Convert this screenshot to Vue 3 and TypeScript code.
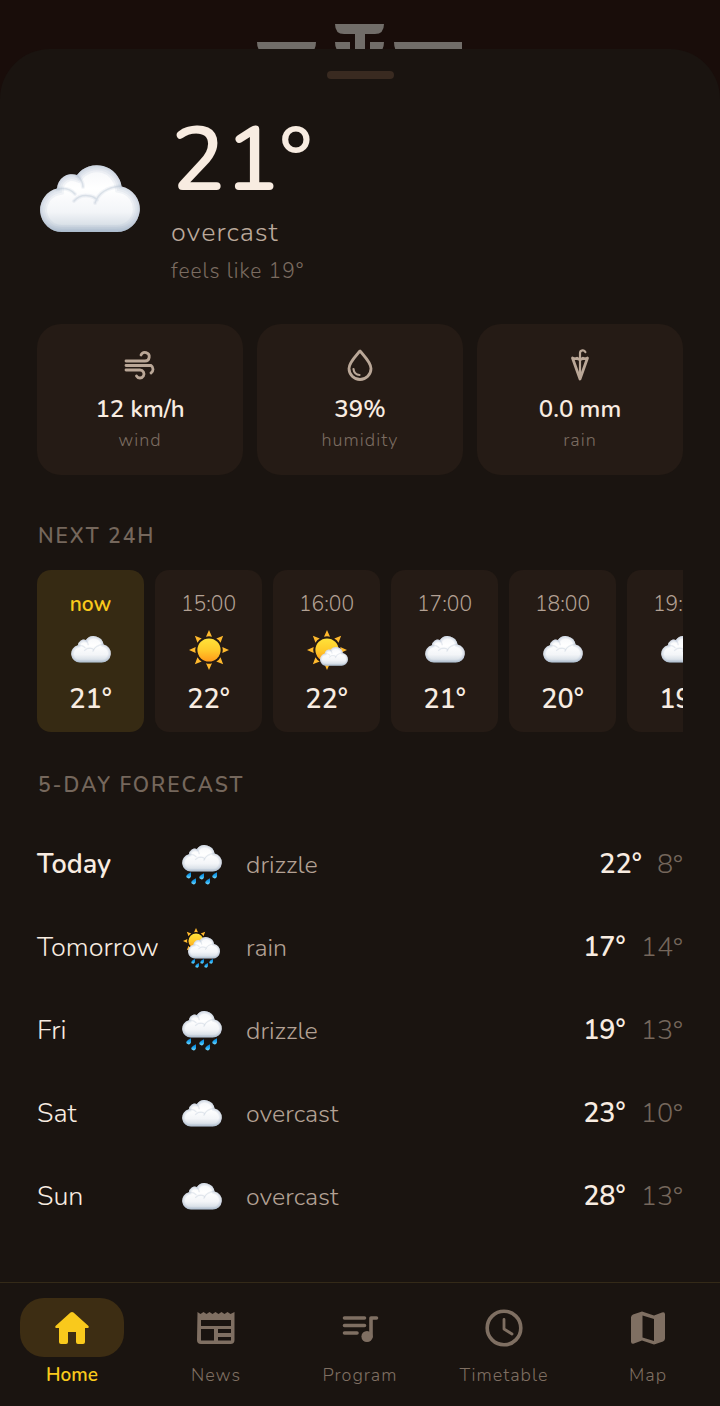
<script setup lang="ts">
type Sky = 'cloud' | 'sun' | 'partly' | 'drizzle' | 'rain'
interface Hour { time: string; sky: Sky; temp: string; now?: boolean }
interface Day { name: string; sky: Sky; text: string; high: string; low: string; today?: boolean }

const stats = [
  { icon: 'wind', value: '12 km/h', label: 'wind' },
  { icon: 'drop', value: '39%', label: 'humidity' },
  { icon: 'umbrella', value: '0.0 mm', label: 'rain' },
]
const hours: Hour[] = [
  { time: 'now', sky: 'cloud', temp: '21°', now: true },
  { time: '15:00', sky: 'sun', temp: '22°' },
  { time: '16:00', sky: 'partly', temp: '22°' },
  { time: '17:00', sky: 'cloud', temp: '21°' },
  { time: '18:00', sky: 'cloud', temp: '20°' },
  { time: '19:00', sky: 'cloud', temp: '19°' },
]
const days: Day[] = [
  { name: 'Today', sky: 'drizzle', text: 'drizzle', high: '22°', low: '8°', today: true },
  { name: 'Tomorrow', sky: 'rain', text: 'rain', high: '17°', low: '14°' },
  { name: 'Fri', sky: 'drizzle', text: 'drizzle', high: '19°', low: '13°' },
  { name: 'Sat', sky: 'cloud', text: 'overcast', high: '23°', low: '10°' },
  { name: 'Sun', sky: 'cloud', text: 'overcast', high: '28°', low: '13°' },
]
const tabs = [
  { label: 'Home', icon: 'home', active: true },
  { label: 'News', icon: 'news', active: false },
  { label: 'Program', icon: 'program', active: false },
  { label: 'Timetable', icon: 'clock', active: false },
  { label: 'Map', icon: 'map', active: false },
]
const cloudOutline = 'M22 67A22 22 0 0 1 17 23.600A15 15 0 0 1 37 10A25 25 0 0 1 81.600 21.500A23 23 0 0 1 77 67z'
const rimLayers = [14, 10, 6, 3]
</script>

<template>
  <div class="app">
    <svg width="0" height="0" class="defs" aria-hidden="true">
      <defs>
        <linearGradient id="base" x1="0" y1="0" x2="0" y2="1">
          <stop offset="0" stop-color="#f4f6f9" />
          <stop offset=".35" stop-color="#ffffff" />
          <stop offset=".7" stop-color="#f3f5f8" />
          <stop offset=".88" stop-color="#dbe2e9" />
          <stop offset="1" stop-color="#b9c8d4" />
        </linearGradient>
        <linearGradient id="disc" x1="0" y1="0" x2="0" y2="1">
          <stop offset="0" stop-color="#ffe23a" />
          <stop offset=".5" stop-color="#ffcb2a" />
          <stop offset="1" stop-color="#ff9a1a" />
        </linearGradient>
        <linearGradient id="water" x1="0" y1="0" x2="0" y2="1">
          <stop offset="0" stop-color="#0a7fd4" />
          <stop offset=".5" stop-color="#1ba3ee" />
          <stop offset="1" stop-color="#7adcff" />
        </linearGradient>
        <clipPath id="cloud-clip"><path :d="cloudOutline" /></clipPath>
        <symbol id="cloud-shape" viewBox="0 0 100 68">
          <path :d="cloudOutline" fill="url(#base)" />
          <g clip-path="url(#cloud-clip)" fill="none" stroke="#9db0c2">
            <path v-for="w in rimLayers" :key="w" :d="cloudOutline" :stroke-width="w" stroke-opacity=".12" />
            <g stroke-linecap="round">
              <path d="M17 24q12-2 18 5M37 10q6 6 6 12M34 36q6-7 16-5 5 1 7 4M55 38q5-15 26-17" stroke-width="4" stroke-opacity=".12" />
              <path d="M17 24q12-2 18 5M37 10q6 6 6 12M34 36q6-7 16-5 5 1 7 4M55 38q5-15 26-17" stroke-width="1.500" stroke-opacity=".28" />
            </g>
          </g>
        </symbol>
        <symbol id="sun-shape" viewBox="0 0 40 40">
          <path
            v-for="n in 8" :key="n" d="M20 0l3 6.700q-3-1-6 0z"
            fill="#ffb92d" :transform="`rotate(${n * 45} 20 20)`"
          />
          <circle cx="20" cy="20" r="11.600" fill="url(#disc)" />
        </symbol>
        <symbol id="bead" viewBox="0 0 6 8">
          <path d="M6 0q.6 3.200-.2 5.600A2.900 2.900 0 0 1 .2 4.600Q1.500 2 6 0z" fill="url(#water)" />
        </symbol>
      </defs>
    </svg>

    <header class="backdrop">
      <svg class="logo" viewBox="0 0 206 36" width="206" height="36" aria-hidden="true">
        <path d="M78 0h49q0 10-9 10h-10v26H98V10H87q-9 0-9-10zM0 18h59q0 9-7 12H7q-7-3-7-12zM78 18h15v12H85q-7-3-7-12zM113 18h14q0 9-7 12h-7zM137 18h68v12h-62q-6-3-6-12z" />
      </svg>
    </header>

    <main class="sheet">
      <div class="handle"></div>
      <section class="current">
        <svg class="big-cloud" viewBox="0 0 100 68"><use href="#cloud-shape" width="100" height="68" /></svg>
        <div>
          <h1>21°</h1>
          <p class="condition">overcast</p>
          <p class="feels">feels like 19°</p>
        </div>
      </section>

      <section class="stats">
        <article v-for="s in stats" :key="s.label" class="stat">
          <svg viewBox="0 0 34 34" class="stat-icon">
            <g v-if="s.icon === 'wind'" class="line">
              <path d="M3 13h19a4.300 4.300 0 1 0-4-6M3 17.500h25a4.500 4.500 0 0 1 0 7.500M3 22h14a4 4 0 1 1-3.500 6" />
            </g>
            <g v-else-if="s.icon === 'drop'" class="line">
              <path d="M17 3C12 9 6 14.500 6 20.500a11 11 0 0 0 22 0C28 14.500 22 9 17 3z" />
              <path class="thin" d="M10.500 21a6.500 6.500 0 0 0 6 6" />
            </g>
            <g v-else class="line">
              <path d="M9.500 10L17 31l7.500-21q-2.500 1.200-4.500.200-1.500 1.200-3 1.200T14 10.200q-2 1-4.500-.200z" />
              <path class="thin" d="M17 30V5a2.800 2.800 0 0 1 5.400-.800" />
            </g>
          </svg>
          <strong>{{ s.value }}</strong>
          <span>{{ s.label }}</span>
        </article>
      </section>

      <h2>NEXT 24H</h2>
      <section class="hours">
        <article v-for="h in hours" :key="h.time" class="hour" :class="{ now: h.now }">
          <span>{{ h.time }}</span>
          <svg class="weather" viewBox="0 0 40 40">
            <use v-if="h.sky === 'cloud'" href="#cloud-shape" y="6" width="40" height="27" />
            <template v-else>
              <use href="#sun-shape" width="40" height="40" />
              <use v-if="h.sky === 'partly'" href="#cloud-shape" x="13" y="17" width="28" height="19" />
            </template>
          </svg>
          <strong>{{ h.temp }}</strong>
        </article>
      </section>

      <h2>5-DAY FORECAST</h2>
      <ul class="days">
        <li v-for="d in days" :key="d.name" :class="{ today: d.today }">
          <span class="day">{{ d.name }}</span>
          <svg class="weather" viewBox="0 0 40 40">
            <use v-if="d.sky === 'cloud'" href="#cloud-shape" y="6" width="40" height="27" />
            <template v-else-if="d.sky === 'drizzle'">
              <use href="#cloud-shape" width="40" height="27" />
              <use href="#bead" x="4" y="27" width="5" height="7" />
              <use href="#bead" x="17" y="28" width="5" height="7" />
              <use href="#bead" x="30" y="27" width="5" height="7" />
              <use href="#bead" x="9" y="33" width="5" height="7" />
              <use href="#bead" x="23" y="33" width="5" height="7" />
            </template>
            <template v-else>
              <use href="#sun-shape" x="1" y="0" width="26" height="26" />
              <use href="#cloud-shape" x="6" y="9" width="32" height="22" />
              <use href="#bead" x="9" y="31" width="4" height="5" />
              <use href="#bead" x="18" y="31" width="4" height="5" />
              <use href="#bead" x="27" y="31" width="4" height="5" />
              <use href="#bead" x="13" y="35" width="4" height="5" />
              <use href="#bead" x="22" y="35" width="4" height="5" />
            </template>
          </svg>
          <span class="text">{{ d.text }}</span>
          <strong>{{ d.high }}</strong>
          <span class="low">{{ d.low }}</span>
        </li>
      </ul>
    </main>

    <nav>
      <a v-for="t in tabs" :key="t.label" href="#" :class="{ active: t.active }">
        <span class="pill">
          <svg viewBox="0 0 44 44">
            <path v-if="t.icon === 'home'" fill="currentColor" d="M20.500 6.500q1.500-1.200 3 0L38.500 20q1 2-1.500 2H35v14q0 2-2 2h-5q-2 0-2-2V26h-8v10q0 2-2 2h-5q-2 0-2-2V22H7q-2.500 0-1.500-2z" />
            <path v-else-if="t.icon === 'news'" fill="currentColor" fill-rule="evenodd" d="M3.500 6l3 2 3-2 3 2 3-2 3 2 3-2 3 2 3-2 3 2 3-2 3 2 4-2v28q0 4-4 4h-29.500q-4 0-4-4zM7 14v6h30v-6zM7 23v11.500h13V23zM24 23v4h13v-4zM24 31v3.500h13V31z" />
            <g v-else-if="t.icon === 'program'" fill="none" stroke="currentColor" stroke-width="3.600" stroke-linecap="round">
              <path d="M6.500 12h20M6.500 19.500h20M6.500 27h12.500M33 31V12h5.500" stroke-linejoin="round" />
              <circle cx="29" cy="30.500" r="5.600" fill="currentColor" stroke="none" />
            </g>
            <g v-else-if="t.icon === 'clock'" fill="none" stroke="currentColor" stroke-linecap="round" stroke-linejoin="round">
              <circle cx="22" cy="22" r="16.800" stroke-width="3.600" />
              <path d="M22 13.500V23l8 5" stroke-width="2.800" />
            </g>
            <path v-else fill="currentColor" fill-rule="evenodd" d="M16 5.500l12 4 8-3q3-1 3 2v24q0 2-2 3l-9 3-12-4-8 3q-3 1-3-2v-24q0-2 2-3zM16.500 9.500v22L28 35V13z" />
          </svg>
        </span>
        <span>{{ t.label }}</span>
      </a>
    </nav>
  </div>
</template>

<style>
body { margin: 0; background: #1a1410; }
</style>

<style scoped>
* { box-sizing: border-box; }
.app {
  min-height: 100vh; display: flex; flex-direction: column;
  background: #190d0a; color: #f8ece1;
  font-family: Nunito, "Open Sans", "Noto Sans", sans-serif; font-weight: 300;
}
.defs { position: absolute; }
p, h1, h2, ul { margin: 0; padding: 0; }
strong { font-weight: 600; }
.backdrop {
  height: 49px; padding-top: 24px; overflow: hidden;
  display: flex; justify-content: center; background: #190d0a;
}
.logo { fill: #716d69; flex: none; }
.sheet {
  flex: 1; padding: 22px 37px 44px; background: #1a1410;
  border-radius: 50px 50px 0 0;
}
.handle { width: 67px; height: 8px; margin: 0 auto; border-radius: 4px; background: #392a20; }
.current { display: flex; align-items: center; gap: 31px; margin-top: 34px; padding-left: 3px; }
.big-cloud { width: 100px; height: 68px; }
h1 { font-size: 90px; line-height: 96px; font-weight: 600; }
.condition { margin-top: 6px; font-size: 27px; line-height: 36px; color: #bba99b; letter-spacing: 1px; }
.feels { margin-top: 6px; font-size: 21px; line-height: 28px; color: #7b6c61; letter-spacing: 1px; }
.stats { display: grid; grid-template-columns: repeat(3, 1fr); gap: 14px; margin-top: 39px; }
.stat {
  display: flex; flex-direction: column; align-items: center;
  height: 151px; padding-top: 24px; border-radius: 24px; background: #251b15;
}
.stat-icon { width: 34px; height: 34px; color: #baa797; }
.line { fill: none; stroke: currentColor; stroke-width: 2.800; stroke-linecap: round; stroke-linejoin: round; }
.thin { stroke-width: 2.200; }
.stat strong { margin-top: 10px; font-size: 24px; line-height: 34px; }
.stat span { margin-top: 1px; font-size: 18px; line-height: 26px; color: #7b6c61; letter-spacing: 1px; }
h2 {
  margin-top: 47px; padding-left: 1px; font-size: 21px; line-height: 28px; font-weight: 600;
  color: #75675c; letter-spacing: 2px;
}
.hours { display: flex; gap: 11px; margin-top: 20px; overflow: hidden; }
.hour {
  flex: none; width: 107px; height: 162px; padding-top: 20px; border-radius: 14px;
  background: #251b15; display: flex; flex-direction: column; align-items: center;
}
.hour span { font-size: 21px; line-height: 28px; color: #b3a194; }
.weather { width: 40px; height: 40px; overflow: visible; }
.hour .weather { margin-top: 12px; }
.hour strong { margin-top: 12px; font-size: 27px; line-height: 36px; }
.hour.now { background: #362a13; }
.hour.now span { color: #f9c91c; font-weight: 600; }
.hours + h2 { margin-top: 39px; }
.days { margin-top: 24px; list-style: none; }
.days li { display: flex; align-items: center; height: 83px; font-size: 27px; line-height: 36px; }
.day { width: 145px; }
.today .day { font-weight: 600; }
.text { flex: 1; margin-left: 24px; font-size: 25px; color: #b3a194; }
.low { margin-left: 15px; color: #75675c; }
nav {
  display: grid; grid-template-columns: repeat(5, 1fr); height: 124px; padding-top: 15px;
  border-top: 1px solid #342a18; background: #1a1410;
}
nav a {
  display: flex; flex-direction: column; align-items: center; gap: 5px;
  color: #7f6f62; text-decoration: none; font-size: 18px; line-height: 26px; letter-spacing: 1px;
}
nav a.active { color: #f9c91c; font-size: 19px; font-weight: 600; letter-spacing: 0; }
.pill { display: grid; place-items: center; width: 104px; height: 59px; border-radius: 24px; }
.active .pill { background: #3d2d13; }
.pill svg { width: 44px; height: 44px; }
</style>
